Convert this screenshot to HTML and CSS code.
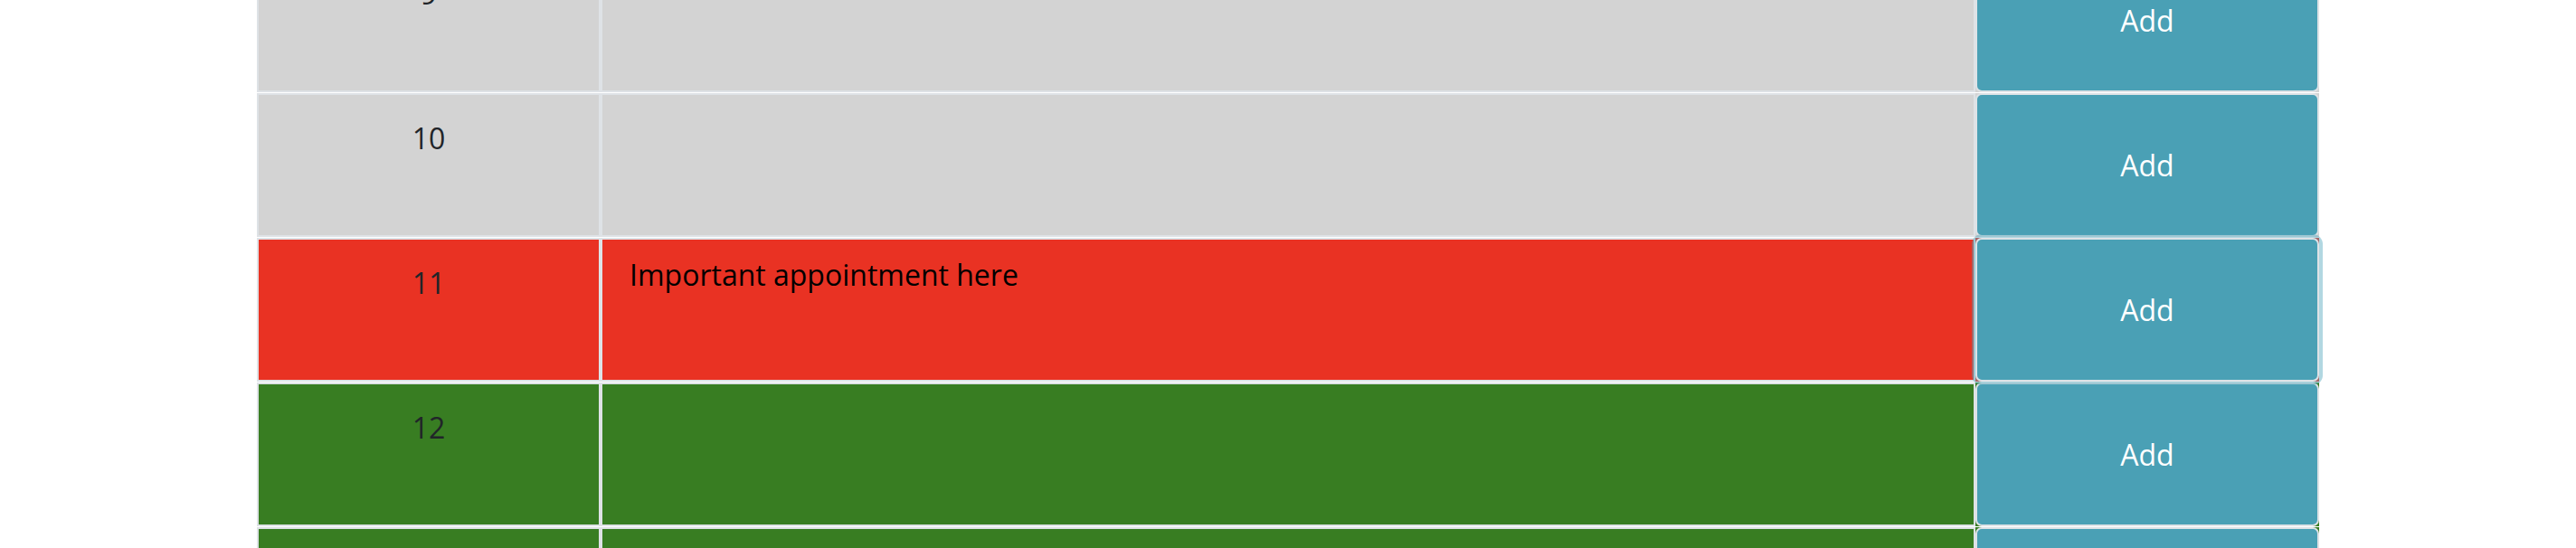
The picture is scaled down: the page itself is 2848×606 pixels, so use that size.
FILE: index.html
```html
<!DOCTYPE html>
<html lang="en">
<head>
<meta charset="utf-8">
<title>Work Day Scheduler</title>
<link rel="stylesheet" href="styles.css">
</head>
<body>
<main class="schedule">
  <div class="time-row past">
    <div class="hour">9</div>
    <textarea class="description"></textarea>
    <button class="save-btn">Add</button>
  </div>
  <div class="time-row past">
    <div class="hour">10</div>
    <textarea class="description"></textarea>
    <button class="save-btn">Add</button>
  </div>
  <div class="time-row present">
    <div class="hour">11</div>
    <textarea class="description">Important appointment here</textarea>
    <button class="save-btn is-focused">Add</button>
  </div>
  <div class="time-row future">
    <div class="hour">12</div>
    <textarea class="description"></textarea>
    <button class="save-btn">Add</button>
  </div>
  <div class="time-row future">
    <div class="hour">13</div>
    <textarea class="description"></textarea>
    <button class="save-btn">Add</button>
  </div>
</main>
</body>
</html>
```

FILE: styles.css
```css
* {
  box-sizing: border-box;
}

html, body {
  margin: 0;
  padding: 0;
  background: #ffffff;
  overflow: hidden;
}

body {
  font-family: "Open Sans", "Noto Sans", sans-serif;
  font-size: 32px;
  line-height: 1.5;
  color: #212529;
}

.schedule {
  width: 2280px;
  margin: -57px auto 0;
}

.time-row {
  display: grid;
  grid-template-columns: 1fr 4fr 1fr;
  height: 159px;
  margin-bottom: 1px;
}

.past { background: #d3d3d3; }
.present { background: #e93223; }
.future { background: #387d22; }

.hour {
  border: 2px solid #dee2e6;
  text-align: center;
  padding-top: 24px;
  color: #212529;
}

.description {
  display: block;
  width: 100%;
  height: 100%;
  margin: 0;
  border: 2px solid #dee2e6;
  background: transparent;
  font-family: "Open Sans", "Noto Sans", sans-serif;
  font-size: 32px;
  line-height: 1.5;
  color: #000000;
  padding: 15px 30px;
  resize: none;
  outline: none;
  overflow: hidden;
}

.save-btn {
  display: flex;
  align-items: center;
  justify-content: center;
  width: 100%;
  height: 100%;
  margin: 0;
  border: 2px solid #dee2e6;
  border-radius: 7px;
  background: #4aa0b5;
  color: #ffffff;
  font-family: "Open Sans", "Noto Sans", sans-serif;
  font-size: 32px;
  line-height: 1.5;
  padding: 0;
  cursor: pointer;
}

.is-focused {
  position: relative;
  z-index: 1;
  box-shadow: 0 0 0 4px rgba(82, 166, 188, 0.45);
}
```
